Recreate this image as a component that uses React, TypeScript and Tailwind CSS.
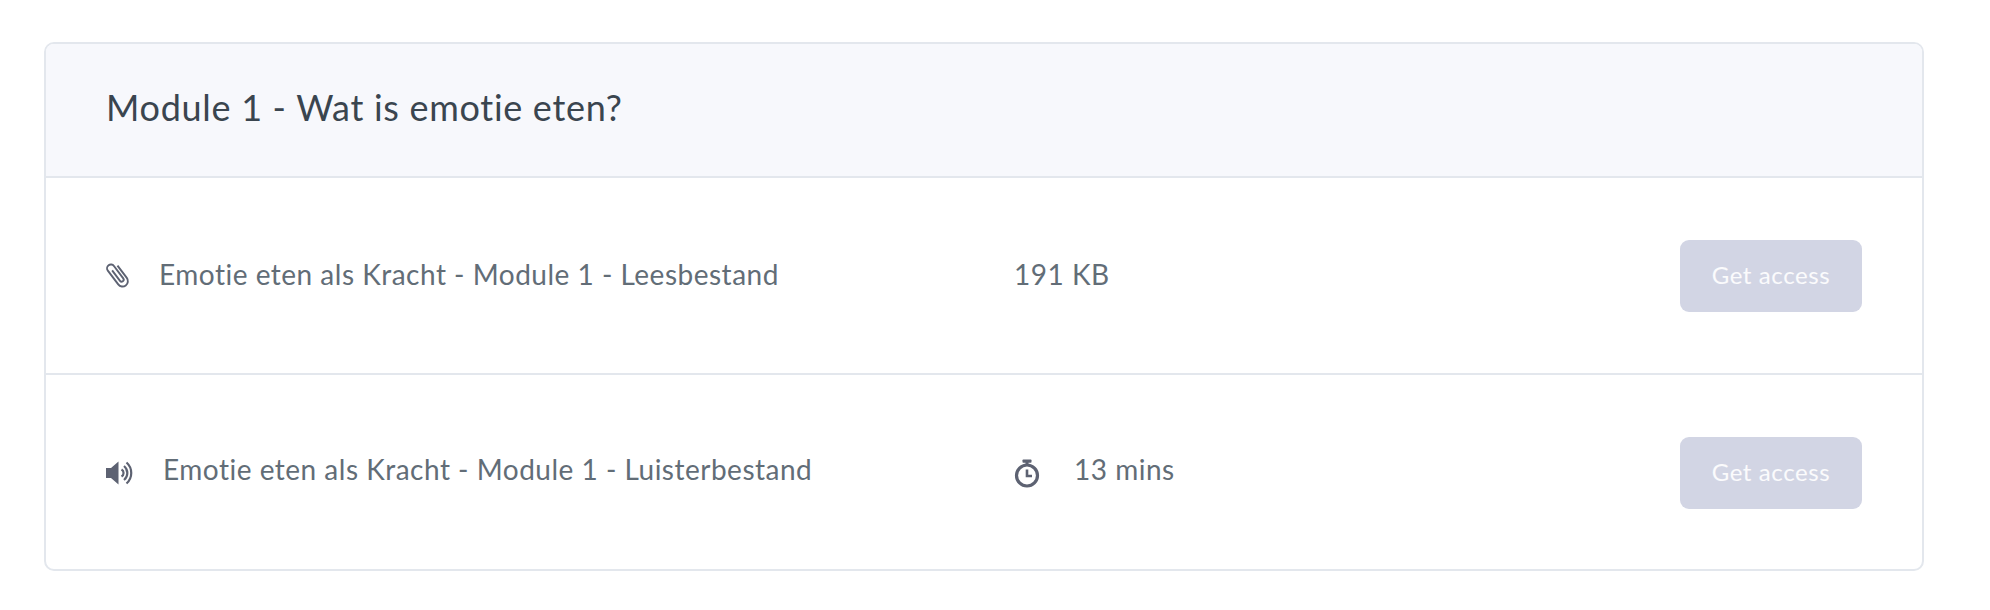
const font = "font-['Lato','Noto_Sans',sans-serif]";

function Clip() {
  return (
    <svg width="31" height="31" viewBox="0 0 26 26" fill="none" stroke="#5d6272" strokeWidth="1.6" className="-mb-[1px] -ml-[4px] -mr-[3px] -mt-[3px] shrink-0">
      <g transform="rotate(-37 13 13)">
        <path d="M11.5 7.5V18.5a1.7 1.7 0 0 0 3.4 0V5.5a3.2 3.2 0 0 0-6.4 0V20a4.5 4.5 0 0 0 9 0V7" />
      </g>
    </svg>
  );
}

function Speaker() {
  return (
    <svg width="30" height="24" viewBox="0 0 30 24" fill="none" stroke="#5d6272" className="shrink-0">
      <path d="M0 7H5L12.5 0.5V23.5L5 17H0Z" fill="#5d6272" stroke="none" />
      <path d="M15.5 8.5a4 4 0 0 1 0 7" strokeWidth="2.2" />
      <path d="M18 5a9 9 0 0 1 0 14" strokeWidth="2.2" />
      <path d="M20.5 1.5a14 14 0 0 1 0 21" strokeWidth="2.2" />
    </svg>
  );
}

function Stopwatch() {
  return (
    <svg width="26" height="30" viewBox="0 0 26 30" fill="none" stroke="#5d6272" className="mt-[3px] shrink-0">
      <rect x="8.5" y="0.5" width="9" height="3.2" rx="0.8" fill="#5d6272" stroke="none" />
      <rect x="11.5" y="3" width="3" height="3" fill="#5d6272" stroke="none" />
      <circle cx="13" cy="16.5" r="10.5" strokeWidth="3.2" />
      <path d="M13 10.5V17H18" strokeWidth="2.6" />
    </svg>
  );
}

function Row({ icon, label, gap, meta, border }: { icon: React.ReactNode; label: string; gap: string; meta: React.ReactNode; border?: boolean }) {
  return (
    <div className={`flex h-[197px] items-center pl-[60px] pr-[60px] ${border ? "border-b-2 border-[#e3e7ed]" : "pb-[2px]"}`}>
      <div className={`flex w-[908px] items-center ${gap}`}>
        {icon}
        <span className={`text-[28px] leading-none tracking-[0.5px] text-[#626d77] ${border ? "-mt-[3px]" : "-mt-[7px]"}`}>{label}</span>
      </div>
      <div className="flex flex-1 items-center gap-[33px] text-[28px] leading-none tracking-[0.5px] text-[#626d77]">{meta}</div>
      <button className="h-[72px] w-[182px] rounded-[9px] bg-[#d2d5e4] pb-[2px] text-[24px] tracking-[0.6px] text-white/90">Get access</button>
    </div>
  );
}

export default function App() {
  return (
    <div className={`min-h-[610px] bg-white pl-[44px] pr-[66px] pt-[42px] ${font}`}>
      <div className="h-[529px] overflow-hidden rounded-[10px] border-2 border-[#e3e7ed]">
        <div className="flex h-[134px] items-center border-b-2 border-[#e3e7ed] bg-[#f7f8fc] pl-[60px]">
          <h2 className="-mt-[6px] text-[36px] leading-none tracking-[0.7px] text-[#3a454f]">Module 1 - Wat is emotie eten?</h2>
        </div>
        <Row icon={<Clip />} label="Emotie eten als Kracht - Module 1 - Leesbestand" gap="gap-[29px]" meta={<span className="-mt-[3px]">191 KB</span>} border />
        <Row icon={<Speaker />} label="Emotie eten als Kracht - Module 1 - Luisterbestand" gap="gap-[27px]" meta={<><Stopwatch /><span className="-mt-[7px] ml-[1px]">13 mins</span></>} />
      </div>
    </div>
  );
}
